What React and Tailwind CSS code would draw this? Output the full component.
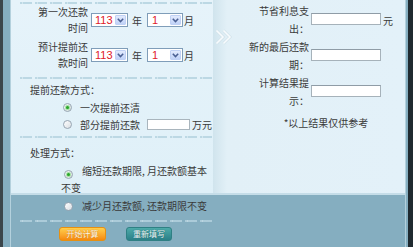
import React from 'react';

const Dots = ({ className = '' }) => (
    <div className={`h-[2px] ml-[9px] bg-[repeating-linear-gradient(to_right,#bcd8e4_0px,#bcd8e4_2px,#d4e7ef_2px,#d4e7ef_3px,#bcd8e4_3px,#bcd8e4_12px,transparent_12px,transparent_15px)] ${className}`} />
);

const Select = ({ value, width, pad }) => (
    <div className={`flex items-center h-[14px] border border-[#7f9db9] bg-white ${width}`}>
        <span className={`text-[11px] leading-none text-[#e0202a] font-['Liberation_Sans',sans-serif] ${pad}`}>{value}</span>
        <span className="ml-auto mr-px w-[11px] h-[10px] rounded-[1px] border border-[#c0d1f5] bg-linear-to-b from-[#e2eafd] to-[#c0d2f7] flex items-center justify-center">
            <svg width="7" height="5" viewBox="0 0 7 5">
                <path d="M0.8 0.8 L3.5 3.6 L6.2 0.8" stroke="#4a5f92" strokeWidth="1.5" fill="none" />
            </svg>
        </span>
    </div>
);

const Radio = ({ on, className = '' }) => (
    <span className={`inline-flex items-center justify-center w-[9px] h-[9px] rounded-full border border-[#97a5b2] bg-linear-to-br from-white to-[#d9dee3] align-[-1px] ${className}`}>
        {on && <span className="w-[3px] h-[3px] rounded-full bg-[#2aa52a] shadow-[0_0_1px_1px_#9ade9a]" />}
    </span>
);

const Field = ({ width = 'w-[70px]' }) => (
    <span className={`inline-block h-[12px] border border-[#a6b2ba] border-t-[#8f9ca6] bg-white ${width}`} />
);

const App = () => {
    return (
        <div className="flex w-[413px] h-[247px] overflow-hidden text-[10px] text-[#3a3a3a] font-['Noto_Sans_CJK_SC',sans-serif]">
            <div className="w-[3px] bg-[#3b464b]" />
            <div className="flex-1 bg-[#85aec0] pl-[7px] pr-[2px]">
                <div className="flex items-start h-full border-l border-r border-[#b4d1dd] bg-[linear-gradient(to_bottom,#e6f3fa_0px,#dff0f8_193px,#c5dde8_193px,#c5dde8_195px,#85aec0_195px)]">
                    {/* left form */}
                    <div className="w-[202px] shrink-0 pt-[2px]">
                        <Dots />
                        <div className="flex flex-col gap-[3px] pb-[6px]">
                            <div className="flex items-center pl-[25px]">
                                <div className="w-[52px] text-right leading-[16px]">第一次还款时间</div>
                                <Select value="113" width="ml-[3px] w-[37px]" pad="pl-[3px]" />
                                <span className="ml-[4px]">年</span>
                                <Select value="1" width="ml-[5px] w-[36px]" pad="pl-[4px]" />
                                <span className="ml-[1px]">月</span>
                            </div>
                            <div className="flex items-center pl-[25px]">
                                <div className="w-[52px] text-right leading-[16px]">预计提前还款时间</div>
                                <Select value="113" width="ml-[3px] w-[37px]" pad="pl-[3px]" />
                                <span className="ml-[4px]">年</span>
                                <Select value="1" width="ml-[5px] w-[36px]" pad="pl-[4px]" />
                                <span className="ml-[1px]">月</span>
                            </div>
                        </div>
                        <Dots />
                        <div className="pt-[2px] pb-[2.5px] leading-[17.5px]">
                            <div className="pl-[19px]">提前还款方式：</div>
                            <div className="pl-[51px] flex items-center">
                                <Radio on className="ml-[1px] mr-[8px]" />
                                <span>一次提前还清</span>
                            </div>
                            <div className="pl-[51px] flex items-center whitespace-nowrap">
                                <Radio className="ml-[1px] mr-[8px]" />
                                <span>部分提前还款</span>
                                <span className="ml-[7px] inline-block w-[43px] h-[11px] border border-[#a9b5bd] bg-white" />
                                <span className="ml-[2px]">万元</span>
                            </div>
                        </div>
                        <Dots />
                        <div className="pt-[6px] leading-[17.5px]">
                            <div className="pl-[19px]">处理方式：</div>
                            <div className="pl-[50px]">
                                <Radio on className="ml-[3px] mr-[9px]" />
                                缩短还款期限, 月还款额基本不变
                            </div>
                            <div className="pl-[50px]">
                                <Radio className="ml-[3px] mr-[9px]" />
                                减少月还款额, 还款期限不变
                            </div>
                        </div>
                        <Dots className="mt-[6px] opacity-70" />
                        <div className="flex pl-[48px] gap-[20px] mt-[5px]">
                            <button className="w-[47px] h-[14px] rounded-[3px] border border-[#e69012] bg-linear-to-b from-[#ffcf4a] to-[#f5890a] text-[8px] leading-none text-[#fffbe8] [text-shadow:0_0_1px_#b85c00]">
                                开始计算
                            </button>
                            <button className="w-[46px] h-[14px] rounded-[3px] border border-[#2f8084] bg-linear-to-b from-[#4eaaa9] to-[#2b8088] text-[8px] leading-none text-[#eefafa] [text-shadow:0_0_1px_#154a50]">
                                重新填写
                            </button>
                        </div>
                    </div>

                    {/* result panel */}
                    <div className="flex-1 h-[193px] flex bg-[linear-gradient(to_right,#d0e4ed_0px,#e2f0f7_14px,#e3f1f9_100%)]">
                        <div className="w-[24px] shrink-0 pt-[29px] pl-[2px]">
                            <svg width="18" height="16" viewBox="0 0 18 16">
                                <path d="M1.5 1.5 L8 8 L1.5 14.5 M8.5 1.5 L15 8 L8.5 14.5" stroke="#d3e3ea" strokeWidth="3" fill="none" />
                                <path d="M1.5 1.5 L8 8 L1.5 14.5 M8.5 1.5 L15 8 L8.5 14.5" stroke="#f7fbfd" strokeWidth="1.6" fill="none" />
                            </svg>
                        </div>
                        <div className="flex-1 pl-[10px] pt-[2px]">
                            <div className="flex items-center h-[36px]">
                                <div className="w-[62px] text-right leading-[18px]">节省利息支出：</div>
                                <span className="ml-[2px]"><Field /></span>
                                <span className="ml-[2px]">元</span>
                            </div>
                            <div className="flex items-center h-[36px]">
                                <div className="w-[62px] text-right leading-[18px]">新的最后还款期：</div>
                                <span className="ml-[2px]"><Field /></span>
                            </div>
                            <div className="flex items-center h-[36px]">
                                <div className="w-[62px] text-right leading-[18px]">计算结果提示：</div>
                                <span className="ml-[2px]"><Field /></span>
                            </div>
                            <div className="mt-[4px] leading-[17px] text-center">*以上结果仅供参考</div>
                        </div>
                    </div>
                </div>
            </div>
            <div className="w-[5px] bg-[#1f2a30]" />
        </div>
    );
};

export default App;
